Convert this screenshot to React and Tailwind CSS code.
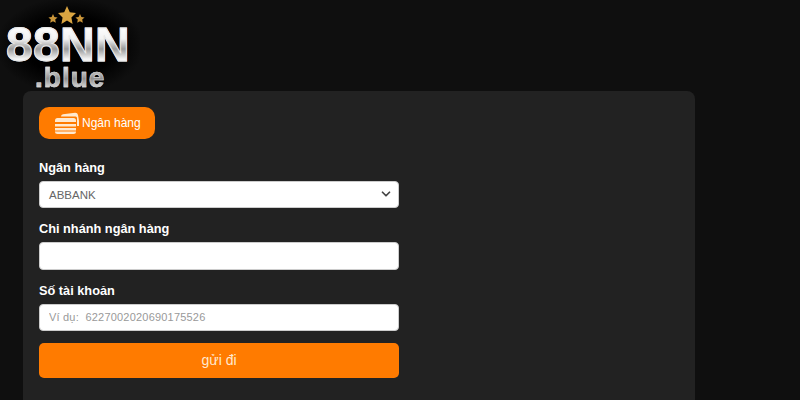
import React from "react";
import { ChevronDown } from "lucide-react";

function Logo() {
  return (
    <div className="relative w-[140px] h-[91px] bg-[radial-gradient(ellipse_at_center,#000000_45%,#0f0f0f_75%)]">
      <svg className="absolute left-[48px] top-[5px]" width="38" height="20" viewBox="0 0 38 20">
        <polygon fill="#d9a441" points="19,1 21.8,7.2 28,8 23.4,12.4 24.6,19 19,15.6 13.4,19 14.6,12.4 10,8 16.2,7.2" />
        <polygon fill="#c9953a" points="5,9 6.4,12 9.6,12.4 7.2,14.6 7.8,17.8 5,16.2 2.2,17.8 2.8,14.6 0.4,12.4 3.6,12" />
        <polygon fill="#c9953a" points="32,9 33.4,12 36.6,12.4 34.2,14.6 34.8,17.8 32,16.2 29.2,17.8 29.8,14.6 27.4,12.4 30.6,12" />
      </svg>
      <div className="absolute left-[6px] top-[25px] font-['Liberation_Sans',sans-serif] font-bold text-[48px] leading-[40px] tracking-[0.3px] text-transparent bg-clip-text bg-[linear-gradient(180deg,#ffffff_0%,#f2f2f2_35%,#9a9a9a_60%,#f4f4f4_85%,#ffffff_100%)] [-webkit-text-stroke:1px_#e8e8e8]">
        88NN
      </div>
      <div className="absolute left-[35px] top-[65px] font-['Liberation_Sans',sans-serif] font-bold text-[28px] leading-[25px] tracking-[1px] text-transparent bg-clip-text bg-[linear-gradient(180deg,#f5f5f5_0%,#8f8f8f_55%,#f0f0f0_100%)] [-webkit-text-stroke:0.6px_#d0d0d0]">
        .blue
      </div>
    </div>
  );
}

function CardsIcon() {
  return (
    <svg width="26" height="26" viewBox="0 0 26 26" className="shrink-0">
      <path fill="#ffe9cf" d="M7 6.5 Q7 4.5 9 4.2 L21 2.8 Q23.5 2.6 24 5 L25 11 L25 16 L23 16 L23 8 Q23 6.5 21.5 6.5 Z" />
      <rect x="1" y="8" width="21" height="16" rx="2.5" fill="#ffe9cf" />
      <rect x="1" y="12" width="21" height="2" fill="#ff7b00" />
      <rect x="1" y="16.5" width="21" height="1.5" fill="#ff7b00" />
      <rect x="1" y="20.5" width="21" height="1" fill="#ff7b00" />
    </svg>
  );
}

export default function App() {
  const label = "block text-[12.75px] leading-[16px] font-bold text-white";
  const field = "block w-full rounded-[4px] bg-white border border-[#cccccc] outline-none";
  return (
    <div className="w-[800px] h-[400px] overflow-hidden bg-[#0f0f0f] font-['Liberation_Sans',Arial,sans-serif]">
      <Logo />
      <div className="ml-[23px] w-[672px] h-[340px] rounded-t-[8px] bg-[#222222] p-4">
        <button className="flex items-center gap-[2px] w-[116px] h-[32px] pl-[15px] rounded-[10px] bg-[#ff7b00] text-white text-[12px]">
          <CardsIcon />
          <span>Ngân hàng</span>
        </button>

        <form className="w-[360px] mt-[21px]">
          <label className={label}>Ngân hàng</label>
          <div className="relative mt-[5px]">
            <div className={field + " h-[27px] pl-[9px] pt-[2px] flex items-center text-[#666666] text-[11.5px]"}>ABBANK</div>
            <ChevronDown className="absolute right-[6px] top-[6px] text-[#444444]" size={14} strokeWidth={3} />
          </div>

          <label className={label + " mt-[13px]"}>Chi nhánh ngân hàng</label>
          <input className={field + " h-[28px] mt-[5px] px-[9px] text-[12px]"} />

          <label className={label + " mt-[13px]"}>Số tài khoản</label>
          <input
            className={field + " h-[27px] mt-[5px] px-[9px] pb-[1px] text-[11px] placeholder:text-[#999999] tracking-[0.2px]"}
            placeholder="Ví dụ:  6227002020690175526"
          />

          <button type="button" className="block w-full h-[35px] mt-[12px] rounded-[5px] bg-[#ff7b00] text-[#ffe9cf] text-[14px]">
            gửi đi
          </button>
        </form>
      </div>
    </div>
  );
}
